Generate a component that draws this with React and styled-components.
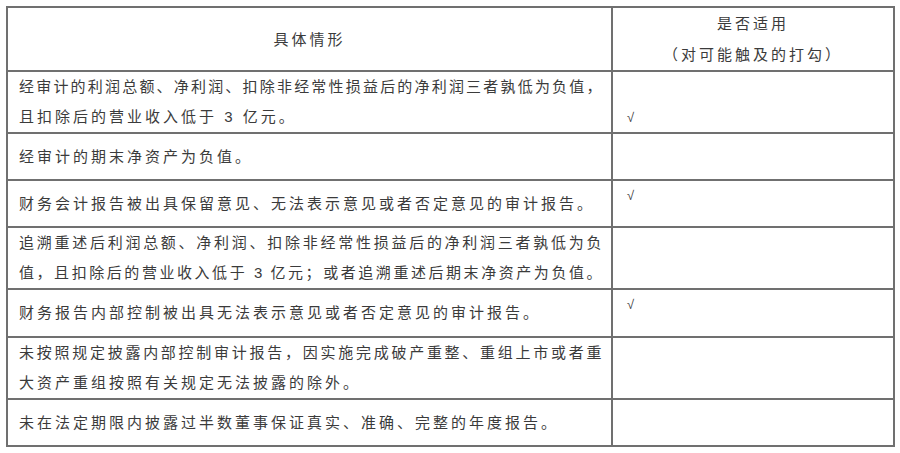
import { createGlobalStyle, styled } from "styled-components";

const GlobalStyle = createGlobalStyle`
  html, body {
    margin: 0;
    padding: 0;
    background: #ffffff;
  }
  body {
    font-family: "Liberation Sans", "Noto Sans CJK SC", sans-serif;
    color: #3b3b3b;
  }
`;

const rows = [
  {
    lines: [
      "经审计的利润总额、净利润、扣除非经常性损益后的净利润三者孰低为负值，",
      "且扣除后的营业收入低于 3 亿元。",
    ],
    height: 61,
    check: "lower",
  },
  { lines: ["经审计的期末净资产为负值。"], height: 47 },
  {
    lines: ["财务会计报告被出具保留意见、无法表示意见或者否定意见的审计报告。"],
    height: 47,
    check: "top",
  },
  {
    lines: [
      "追溯重述后利润总额、净利润、扣除非经常性损益后的净利润三者孰低为负",
      "值，且扣除后的营业收入低于 3 亿元；或者追溯重述后期末净资产为负值。",
    ],
    height: 61,
    fillLast: true,
  },
  {
    lines: ["财务报告内部控制被出具无法表示意见或者否定意见的审计报告。"],
    height: 48,
    check: "top",
  },
  {
    lines: [
      "未按照规定披露内部控制审计报告，因实施完成破产重整、重组上市或者重",
      "大资产重组按照有关规定无法披露的除外。",
    ],
    height: 62,
  },
  {
    lines: ["未在法定期限内披露过半数董事保证真实、准确、完整的年度报告。"],
    height: 47,
  },
];

function App() {
  return (
    <>
      <GlobalStyle />
      <Page>
        <Table>
          <colgroup>
            <col style={{ width: 605 }} />
            <col style={{ width: 282 }} />
          </colgroup>
          <tbody>
            <Row $h={60}>
              <HeadCell>具体情形</HeadCell>
              <HeadCell>
                <HeadLine>是否适用</HeadLine>
                <HeadLine>（对可能触及的打勾）</HeadLine>
              </HeadCell>
            </Row>
            {rows.map((r, i) => (
              <Row key={i} $h={r.height}>
                <TextCell>
                  {r.lines.map((l, j) => (
                    <Line
                      key={j}
                      $justify={j < r.lines.length - 1 || Boolean(r.fillLast)}
                    >
                      {l}
                    </Line>
                  ))}
                </TextCell>
                <CheckCell>
                  {r.check && <Check $lower={r.check === "lower"}>√</Check>}
                </CheckCell>
              </Row>
            ))}
          </tbody>
        </Table>
      </Page>
    </>
  );
}

const Page = styled.div`
  padding: 6px 6px 0 6px;
`;

const Table = styled.table`
  width: 888px;
  table-layout: fixed;
  border-collapse: collapse;
  border: 2px solid #707070;
`;

const Row = styled.tr`
  height: ${({ $h }) => $h}px;
`;

const Cell = styled.td`
  border: 2px solid #707070;
  padding: 0;
  font-size: 15px;
  letter-spacing: 3px;
`;

const HeadCell = styled(Cell)`
  text-align: center;
  vertical-align: middle;
  line-height: 31px;
`;

const HeadLine = styled.div`
  display: block;
`;

const TextCell = styled(Cell)`
  vertical-align: middle;
  padding: 0 8px 0 11px;
  line-height: 30px;
  overflow: hidden;
`;

const Line = styled.div`
  white-space: nowrap;
  letter-spacing: ${({ $justify }) => ($justify ? "1.5px" : "3px")};
  text-align: ${({ $justify }) => ($justify ? "justify" : "left")};
  text-align-last: ${({ $justify }) => ($justify ? "justify" : "left")};
`;

const CheckCell = styled(Cell)`
  vertical-align: top;
  padding: 0 0 0 14px;
`;

const Check = styled.span`
  display: block;
  font-size: 13px;
  line-height: 14px;
  letter-spacing: 0;
  color: #404040;
  margin-top: ${({ $lower }) => ($lower ? "39px" : "8px")};
`;

export default App;
